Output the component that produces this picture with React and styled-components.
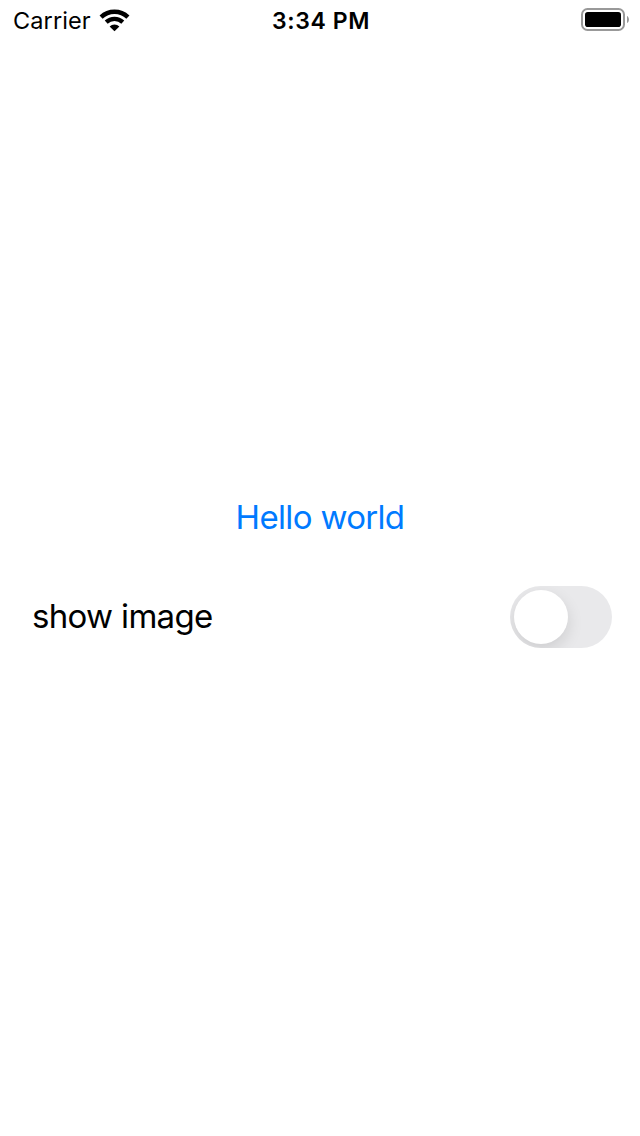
import React, { useState } from "react";
import styled, { createGlobalStyle } from "styled-components";

const GlobalStyle = createGlobalStyle`
  * { box-sizing: border-box; }
  html, body { margin: 0; background: #fff; }
  body { font-family: Inter, "Liberation Sans", sans-serif; color: #000; }
`;

const Screen = styled.div`
  width: 640px;
  height: 1136px;
  display: flex;
  flex-direction: column;
  background: #fff;
`;

const StatusBar = styled.header`
  height: 40px;
  padding: 0 11px 0 13px;
  display: grid;
  grid-template-columns: 1fr auto 1fr;
  align-items: center;
  font-size: 24px;
  line-height: 38px;
`;

const Network = styled.div`
  display: flex;
  align-items: center;
  gap: 8px;
  padding-top: 2px;
`;

const Carrier = styled.span`
  font-size: 23.5px;
  letter-spacing: 0.1px;
`;

const Clock = styled.time`
  padding-top: 2px;
  font-weight: 600;
  font-size: 23px;
  letter-spacing: 0.6px;
`;

const Power = styled.div`
  display: flex;
  justify-content: flex-end;
`;

const Content = styled.main`
  flex: 1;
  display: flex;
  flex-direction: column;
  padding: 456px 28px 0;
`;

const LinkButton = styled.button`
  align-self: center;
  border: 0;
  padding: 0;
  background: none;
  color: #007aff;
  font: 400 33px/42px Inter, "Liberation Sans", sans-serif;
  letter-spacing: -0.67px;
`;

const ToggleRow = styled.label`
  margin-top: 48px;
  height: 62px;
  padding-left: 4px;
  display: flex;
  align-items: center;
  justify-content: space-between;
`;

const ToggleLabel = styled.span`
  font-size: 33px;
  line-height: 60px;
  padding-bottom: 2px;
  letter-spacing: -0.67px;
`;

const Track = styled.button`
  width: 102px;
  height: 62px;
  border: 0;
  border-radius: 31px;
  padding: 4px;
  display: flex;
  justify-content: ${(p) => (p.$on ? "flex-end" : "flex-start")};
  background: ${(p) => (p.$on ? "#34c759" : "#e9e9eb")};
  overflow: hidden;
`;

const Knob = styled.span`
  width: 54px;
  height: 54px;
  border-radius: 50%;
  background: #fff;
  box-shadow: 0 6px 16px rgba(0, 0, 0, 0.12);
`;

const WifiIcon = () => (
  <svg width="31" height="24" viewBox="0 0 31 24" fill="none">
    <path d="M2.1 8.2 A19.4 19.4 0 0 1 28.9 8.2" stroke="#000" strokeWidth="4.5" />
    <path d="M7.2 13.2 A12.2 12.2 0 0 1 23.8 13.2" stroke="#000" strokeWidth="4.3" />
    <path d="M15.5 22.2 L10.6 17.5 A7 7 0 0 1 20.4 17.5 Z" fill="#000" />
  </svg>
);

const BatteryIcon = () => (
  <svg width="48" height="24" viewBox="0 0 48 24" fill="none">
    <rect x="1" y="1" width="42" height="21" rx="5.5" stroke="#999" strokeWidth="2" />
    <rect x="4" y="4" width="36" height="15" rx="2.8" fill="#000" />
    <path d="M46 8 C48.6 9 48.6 14 46 15 Z" fill="#999" />
  </svg>
);

export default function App() {
  const [showImage, setShowImage] = useState(false);
  return (
    <Screen>
      <GlobalStyle />
      <StatusBar>
        <Network>
          <Carrier>Carrier</Carrier>
          <WifiIcon />
        </Network>
        <Clock>3:34 PM</Clock>
        <Power>
          <BatteryIcon />
        </Power>
      </StatusBar>
      <Content>
        <LinkButton>Hello world</LinkButton>
        <ToggleRow>
          <ToggleLabel>show image</ToggleLabel>
          <Track
            type="button"
            role="switch"
            aria-checked={showImage}
            $on={showImage}
            onClick={() => setShowImage(!showImage)}
          >
            <Knob />
          </Track>
        </ToggleRow>
      </Content>
    </Screen>
  );
}
